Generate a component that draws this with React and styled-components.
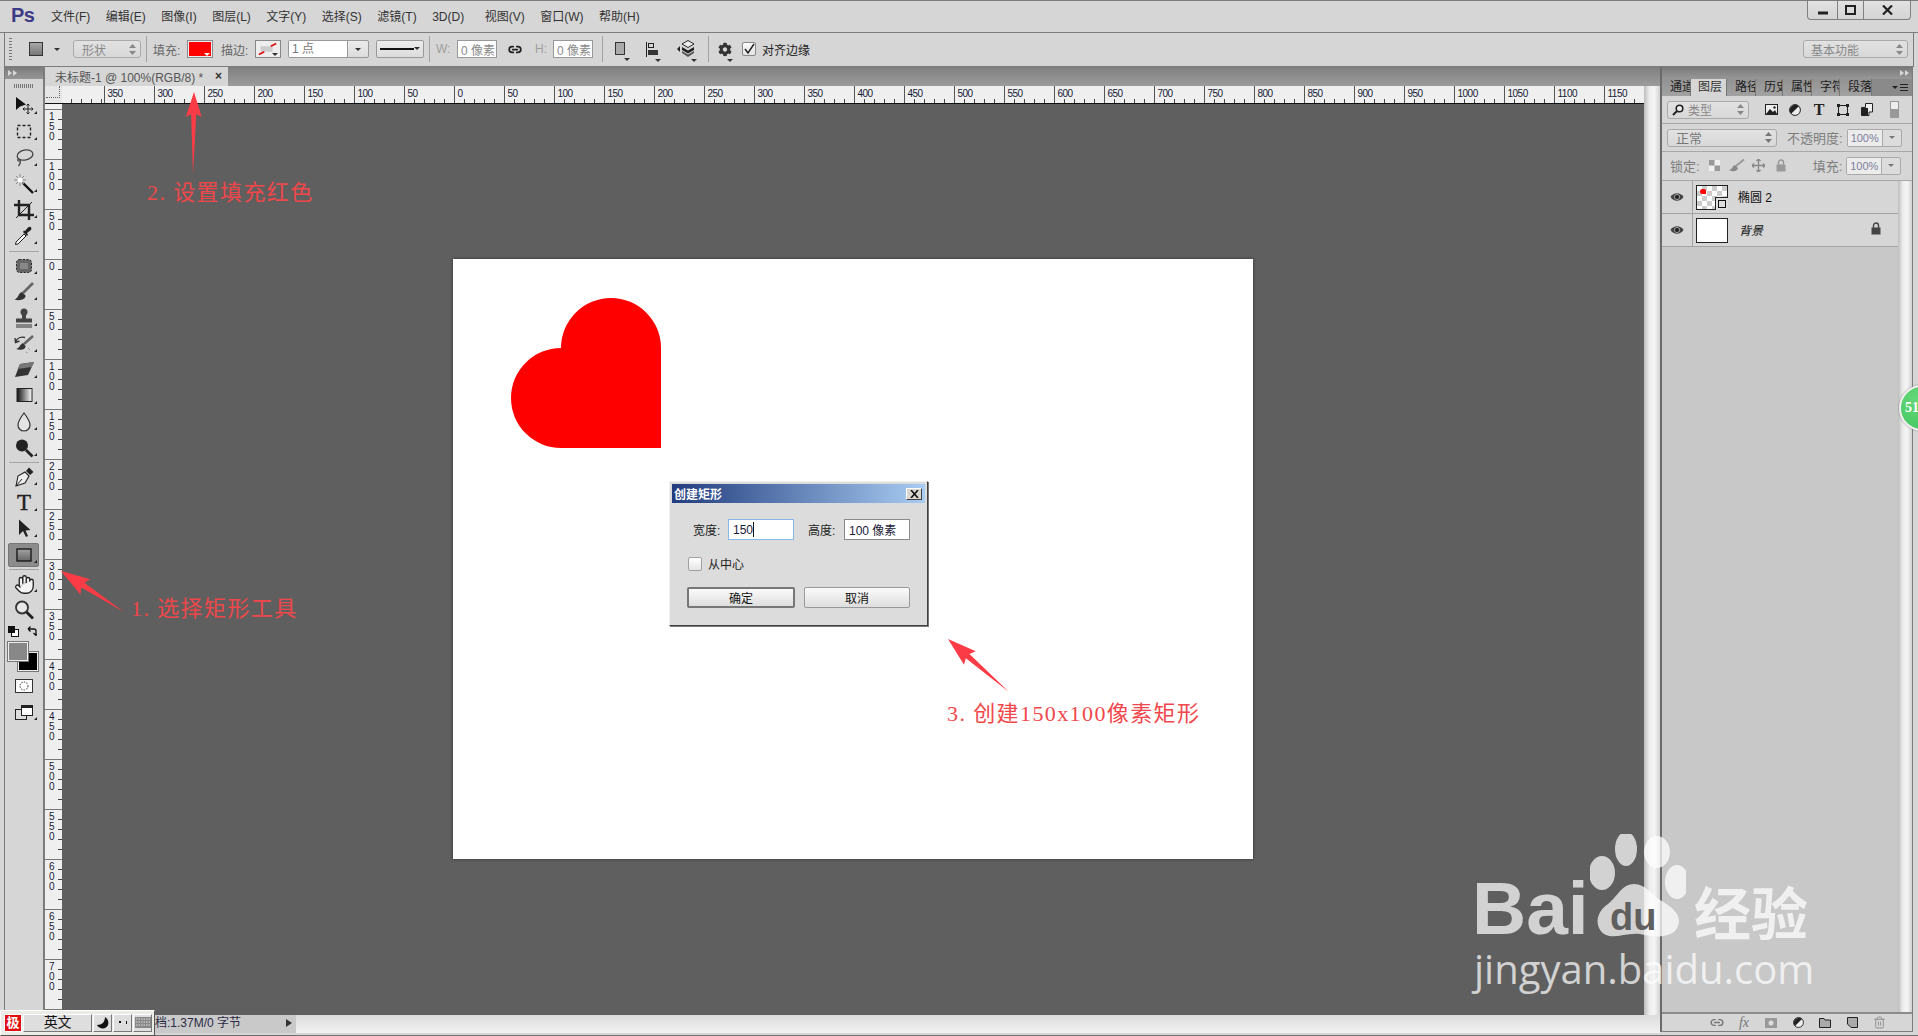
import React from "react";
import styled, { createGlobalStyle } from "styled-components";
import { Hand, Link2, Trash2 } from "lucide-react";
import { FaCog } from "react-icons/fa";

const Global = createGlobalStyle`
  html, body { margin: 0; padding: 0; background: #d6d6d6; }
  * { box-sizing: border-box; }
`;

const Screen = styled.div`
  position: relative;
  width: 1918px;
  height: 1036px;
  overflow: hidden;
  background: #d6d6d6;
  color: #222;
  font-family: "Liberation Sans", "Noto Sans CJK SC", sans-serif;
  font-size: 12px;
`;

/* ---------- title bar ---------- */
const TitleBar = styled.div`
  height: 33px;
  display: flex;
  align-items: center;
  padding: 0 0 2px 11px;
  border-top: 1px solid #7c7c7c;
  border-bottom: 1px solid #7c7c7c;
`;
const Logo = styled.div`
  width: 40px;
  font-size: 20px;
  font-weight: 700;
  color: #3d3a87;
  letter-spacing: -0.5px;
`;
const Menu = styled.div`
  display: flex;
  align-items: baseline;
  gap: 15.5px;
  color: #333;
  & > span:nth-child(8) { margin-right: 5px; }
`;
const WindowButtons = styled.div`
  margin-left: auto;
  margin-right: 7px;
  align-self: flex-start;
  display: flex;
  height: 19px;
  border: 1px solid #808080;
  border-top: 0;
  border-radius: 0 0 4px 4px;
  background: linear-gradient(#e2e2e2, #d4d4d4);
`;
const WindowButton = styled.div`
  width: ${(p) => p.$w}px;
  display: flex;
  align-items: center;
  justify-content: center;
  & + & { border-left: 1px solid #808080; }
`;

/* ---------- options bar ---------- */
const OptionsBar = styled.div`
  height: 34px;
  margin: 0 4px;
  padding-bottom: 1px;
  display: flex;
  align-items: center;
  border-left: 1px solid #7c7c7c;
  border-right: 1px solid #7c7c7c;
  border-bottom: 1px solid #7c7c7c;
`;
const Opt = styled.div`
  flex-shrink: 0;
  position: relative;
  margin-left: ${(p) => p.$ml || 0}px;
  width: ${(p) => p.$w}px;
  display: flex;
  align-items: center;
  white-space: nowrap;
  color: ${(p) => p.$color || "inherit"};
`;
const Grip = styled(Opt)`
  height: 22px;
  background: repeating-linear-gradient(#777 0 1px, transparent 1px 3px);
`;
const Divider = styled(Opt)`
  height: 26px;
  width: 1px;
  background: #a2a2a2;
`;
const ShapeSwatch = styled(Opt)`
  height: 14px;
  border: 1px solid #333;
  background: linear-gradient(#a8a8a8, #777);
`;
const Caret = styled.span`
  display: block;
  width: 0;
  height: 0;
  border-left: 3px solid transparent;
  border-right: 3px solid transparent;
  border-top: 3px solid ${(p) => p.$color || "#333"};
`;
const MiniCaret = styled(Caret)`
  position: absolute;
  right: ${(p) => p.$r ?? 2}px;
  bottom: ${(p) => p.$b ?? 1}px;
`;
const SelectBox = styled(Opt)`
  height: ${(p) => p.$h || 18}px;
  padding: 0 4px 0 ${(p) => p.$pad ?? 8}px;
  justify-content: space-between;
  border: 1px solid #aaa;
  border-radius: 3px;
  background: linear-gradient(#e2e2e2, #d8d8d8);
  color: ${(p) => p.$color || "#888"};
`;
const FilterLabel = styled.span`
  display: flex;
  align-items: center;
  gap: 4px;
  font-size: 12px;
`;
const FillSwatch = styled(Opt)`
  height: 18px;
  border: 1px solid #888;
  padding: 1px;
  background: #eee;
`;
const FillRed = styled.div`
  width: 100%;
  height: 100%;
  background: #f00;
`;
const NumberInput = styled(Opt)`
  height: 18px;
  padding-left: 3px;
  border: 1px solid #999;
  background: #fff;
  color: #8a8a8a;
`;
const SplitInput = styled(Opt)`
  height: 18px;
  border: 1px solid #999;
  border-radius: 2px;
  background: linear-gradient(#ececec, #dcdcdc);
`;
const SplitText = styled.div`
  flex: 1;
  height: 100%;
  padding-left: 3px;
  background: #fff;
  color: #777;
  border-right: 1px solid #999;
  line-height: 16px;
`;
const SplitArrow = styled.div`
  width: 20px;
  display: flex;
  justify-content: center;
`;
const LineBar = styled.div`
  width: 34px;
  height: 2px;
  margin: 0 auto 0 3px;
  background: #111;
`;
const CheckBox = styled(Opt)`
  height: 14px;
  border: 1px solid #888;
  border-radius: 2px;
  background: linear-gradient(#fafafa, #e4e4e4);
  justify-content: center;
`;
const Spread = styled.div`
  margin-left: auto;
  margin-right: 5px;
`;

/* ---------- work area ---------- */
const Workspace = styled.div`
  height: 969px;
  display: flex;
  padding-left: 4px;
  border-bottom: 1px solid #6f6f6f;
`;
const ToolColumn = styled.div`
  width: 41px;
  height: 966px;
  flex-shrink: 0;
  display: flex;
  flex-direction: column;
  border-left: 1px solid #7c7c7c;
  border-right: 2px solid #7c7c7c;
`;
const CollapseBar = styled.div`
  height: 12px;
  flex-shrink: 0;
  padding: 2px 3px;
  display: flex;
  justify-content: ${(p) => (p.$right ? "flex-end" : "flex-start")};
  gap: 1px;
  background: linear-gradient(#7a7a7a, #979797);
`;
const CollapseMark = styled.span`
  width: 0;
  height: 0;
  margin-top: 1px;
  border-top: 3px solid transparent;
  border-bottom: 3px solid transparent;
  border-left: 4px solid #d8d8d8;
`;
const ToolGrip = styled.div`
  height: 14px;
  flex-shrink: 0;
  margin: 0 9px;
  background: repeating-linear-gradient(90deg, #777 0 1px, transparent 1px 2px) center / 100% 4px no-repeat;
`;
const ToolSlot = styled.div`
  position: relative;
  height: 26px;
  flex-shrink: 0;
  display: flex;
  align-items: center;
  justify-content: center;
  &::before {
    content: "";
    display: ${(p) => (p.$active ? "block" : "none")};
    position: absolute;
    left: 3px;
    right: 4px;
    top: 1px;
    bottom: 1px;
    border-radius: 2px;
    background: #8c8c8c;
    border: 1px solid #777;
  }
  & > * { position: relative; }
  &::after {
    content: "";
    display: ${(p) => (p.$more ? "block" : "none")};
    position: absolute;
    right: 6px;
    bottom: 5px;
    border-left: 3px solid transparent;
    border-bottom: 3px solid #222;
  }
`;
const ToolSep = styled.div`
  height: ${(p) => p.$h || 4}px;
  flex-shrink: 0;
  margin: 0 4px;
  display: flex;
  align-items: center;
  &::after {
    content: "";
    width: 100%;
    height: 1px;
    background: #a6a6a6;
  }
`;
const ToolGlyph = styled.span`
  font-family: "Liberation Serif", serif;
  font-size: 23px;
  line-height: 22px;
  color: #222;
  -webkit-text-stroke: 0.4px #222;
`;
const DefaultsRow = styled.div`
  height: 17px;
  flex-shrink: 0;
  display: flex;
  align-items: center;
  justify-content: space-between;
  padding: 0 6px 0 3px;
`;
const SwatchBox = styled.div`
  position: relative;
  height: 33px;
  flex-shrink: 0;
`;
const ColorChip = styled.div`
  position: absolute;
  left: ${(p) => p.$l}px;
  top: ${(p) => p.$t}px;
  width: 20px;
  height: 19px;
  background: ${(p) => p.$c};
  border: 1px solid #eee;
  outline: 1px solid #777;
`;

const DocColumn = styled.div`
  width: 1615px;
  height: 966px;
  flex-shrink: 0;
  display: flex;
  flex-direction: column;
`;
const TabStrip = styled.div`
  height: 19px;
  flex-shrink: 0;
  display: flex;
  background: linear-gradient(#7f7f7f, #9c9c9c);
`;
const DocTab = styled.div`
  width: 183px;
  display: flex;
  align-items: center;
  padding: 0 0 1px 10px;
  background: #d6d6d6;
  color: #555;
  font-size: 12px;
  white-space: nowrap;
`;
const TabClose = styled.span`
  margin-left: auto;
  margin-right: 6px;
  font-weight: 700;
  color: #333;
`;
const DocMain = styled.div`
  flex: 1;
  min-height: 0;
  display: flex;
`;
const ViewArea = styled.div`
  width: 1599px;
  display: flex;
  flex-direction: column;
`;
const HRuler = styled.div`
  height: 18px;
  flex-shrink: 0;
  display: flex;
  overflow: hidden;
  background: #efefef;
  border-bottom: 1px solid #111;
`;
const RulerCorner = styled.div`
  width: 17px;
  flex-shrink: 0;
  position: relative;
  background: #e6e6e6;
  &::after {
    content: "";
    position: absolute;
    left: 1px;
    top: 0;
    width: 13px;
    height: 11px;
    border-right: 1px dotted #666;
    border-bottom: 1px dotted #666;
  }
`;
const HCell = styled.div`
  width: ${(p) => p.$w}px;
  flex-shrink: 0;
  padding: 3px 0 0 3px;
  border-left: ${(p) => (p.$first ? "0" : "1px solid #555")};
  font-size: 10px;
  line-height: 10px;
  letter-spacing: -0.5px;
  color: #151a35;
  background: linear-gradient(90deg, #444 1px, transparent 1px) -1px bottom / 10px 4px repeat-x;
`;
const CanvasRow = styled.div`
  flex: 1;
  min-height: 0;
  display: flex;
`;
const VRuler = styled.div`
  width: 17px;
  flex-shrink: 0;
  overflow: hidden;
  background: #efefef;
`;
const VCell = styled.div`
  height: ${(p) => p.$h}px;
  padding: 2px 0 0 4px;
  border-top: ${(p) => (p.$first ? "0" : "1px solid #777")};
  font-size: 10px;
  line-height: 10px;
  color: #151a35;
  background: linear-gradient(#444 1px, transparent 1px) right -1px / 4px 10px repeat-y;
`;
const Digit = styled.div``;
const Pasteboard = styled.div`
  position: relative;
  flex: 1;
  padding: 155px 0 0 391px;
  background: #5f5f5f;
`;
const Canvas = styled.div`
  width: 800px;
  height: 600px;
  padding: 39px 0 0 58px;
  background: #fff;
  box-shadow: 0 0 3px rgba(0, 0, 0, 0.5);
`;
const HeartSvg = styled.svg`
  display: block;
`;
const Gutter = styled.div`
  width: ${(p) => p.$w}px;
  flex-shrink: 0;
  background: linear-gradient(90deg, #bdbdbd, #ededed 35%, #f5f5f5 65%, #d2d2d2);
`;
const StatusRow = styled.div`
  height: 18px;
  flex-shrink: 0;
  display: flex;
  background: linear-gradient(#dcdcdc, #f2f2f2);
`;
const StatusInfo = styled.div`
  width: 251px;
  display: flex;
  align-items: center;
  padding: 0 0 3px 98px;
  line-height: 14px;
  background: #c9c9c9;
  color: #2a2a44;
  white-space: nowrap;
`;
const StatusArrow = styled.span`
  margin-left: auto;
  margin-right: 4px;
  border-top: 4px solid transparent;
  border-bottom: 4px solid transparent;
  border-left: 6px solid #333;
`;

/* ---------- layers panel ---------- */
const PanelColumn = styled.div`
  width: 253px;
  height: 965px;
  flex-shrink: 0;
  display: flex;
  flex-direction: column;
  border-left: 2px solid #6a6a6a;
  border-right: 1px solid #7c7c7c;
  border-bottom: 1px solid #7c7c7c;
`;
const PanelTabs = styled.div`
  height: 17px;
  flex-shrink: 0;
  display: flex;
  align-items: stretch;
  background: #8a8a8a;
`;
const PanelTab = styled.div`
  width: ${(p) => p.$w}px;
  overflow: hidden;
  white-space: nowrap;
  padding-left: ${(p) => (p.$active ? 7 : 8)}px;
  line-height: 17px;
  background: ${(p) => (p.$active ? "#d6d6d6" : "linear-gradient(#929292, #a2a2a2)")};
  border-right: 1px solid #777;
  color: ${(p) => (p.$active ? "#333" : "#1c1c1c")};
`;
const PanelMenu = styled.div`
  margin-left: auto;
  margin-right: 4px;
  display: flex;
  align-items: center;
  gap: 2px;
`;
const MenuLines = styled.div`
  width: 8px;
  height: 7px;
  background: repeating-linear-gradient(#222 0 1px, transparent 1px 3px);
`;
const PanelRow = styled.div`
  height: ${(p) => p.$h}px;
  flex-shrink: 0;
  display: flex;
  align-items: center;
  padding: 0 0 ${(p) => p.$pb || 0}px 5px;
  border-bottom: 1px solid #a8a8a8;
  color: #7d7d7d;
  font-size: 13px;
`;
const PanelIcon = styled.div`
  margin-left: ${(p) => p.$ml || 0}px;
  width: ${(p) => p.$w || 14}px;
  flex-shrink: 0;
  display: flex;
  justify-content: center;
`;
const PanelGlyph = styled.span`
  font-family: "Liberation Serif", serif;
  font-weight: 700;
  font-size: 16px;
  line-height: 16px;
  color: #222;
`;
const FootGlyph = styled.i`
  font-family: "Liberation Serif", serif;
  font-size: 14px;
  color: #777;
`;
const LayerToggle = styled.div`
  width: 9px;
  height: 17px;
  margin-left: 16px;
  border: 1px solid #999;
  background: linear-gradient(#eee 45%, #999 45%);
`;
const RowLabel = styled.span`
  margin-left: ${(p) => p.$ml}px;
  white-space: nowrap;
`;
const PercentBox = styled.div`
  width: 55px;
  height: 18px;
  margin-left: 4px;
  display: flex;
  border: 1px solid #aaa;
  border-radius: 2px;
  background: #dcdcdc;
`;
const PercentText = styled.div`
  width: 35px;
  padding-left: 3px;
  background: #ececec;
  border-right: 1px solid #aaa;
  color: #7d7d9a;
  font-size: 11px;
  line-height: 16px;
`;
const PercentArrow = styled.div`
  flex: 1;
  display: flex;
  align-items: center;
  justify-content: center;
`;
const PanelMain = styled.div`
  flex: 1;
  min-height: 0;
  display: flex;
`;
const LayerList = styled.div`
  flex: 1;
  background: #c8c8c8;
`;
const LayerRow = styled.div`
  height: ${(p) => p.$h}px;
  display: flex;
  align-items: center;
  background: #d6d6d6;
  border-bottom: 1px solid #a4a4a4;
`;
const EyeCell = styled.div`
  width: 31px;
  height: 100%;
  flex-shrink: 0;
  display: flex;
  align-items: center;
  justify-content: center;
  border-right: 1px solid #a4a4a4;
`;
const Thumb = styled.div`
  position: relative;
  width: 32px;
  height: 25px;
  margin-left: 3px;
  border: 1px solid #222;
  background: ${(p) => (p.$checker ? "repeating-conic-gradient(#ccc 0 25%, #fff 0 50%) 0 0 / 10px 10px" : "#fff")};
`;
const ThumbHeart = styled.div`
  position: absolute;
  left: 3px;
  top: 3px;
  width: 6px;
  height: 5px;
  border-radius: 3px 2px 0 3px;
  background: #f00;
`;
const ThumbMask = styled.div`
  position: absolute;
  right: -1px;
  bottom: -1px;
  width: 13px;
  height: 13px;
  background: #ddd;
  border: 1px solid #222;
  border-width: 1px 0 0 1px;
  padding: 2px;
`;
const MaskInner = styled.div`
  width: 100%;
  height: 100%;
  border: 1px solid #111;
`;
const LayerName = styled.span`
  margin-left: ${(p) => p.$ml}px;
  padding-bottom: 1px;
  color: #111;
  font-style: ${(p) => (p.$italic ? "italic" : "normal")};
`;
const LayerLock = styled.div`
  margin-left: auto;
  margin-right: 17px;
`;
const PanelFoot = styled.div`
  height: 19px;
  flex-shrink: 0;
  display: flex;
  align-items: center;
  gap: 13px;
  padding-left: 48px;
  border-top: 2px solid #8c8c8c;
`;

/* ---------- dialog ---------- */
const Dialog = styled.div`
  position: absolute;
  left: 607px;
  top: 377px;
  width: 259px;
  height: 145px;
  padding: 2px;
  background: #dcdcdc;
  border: 1px solid;
  border-color: #f2f2ee #404040 #404040 #f2f2ee;
  box-shadow: 1px 1px 0 #7a7a7a;
`;
const DialogTitle = styled.div`
  height: 19px;
  display: flex;
  align-items: center;
  justify-content: space-between;
  padding: 0 3px 0 2px;
  background: linear-gradient(90deg, #223c7e, #a8ccf2);
  color: #fff;
  font-weight: 700;
`;
const CloseBox = styled.div`
  width: 16px;
  height: 12px;
  display: flex;
  align-items: center;
  justify-content: center;
  background: #d8d6ce;
  border: 1px solid;
  border-color: #fff #404040 #404040 #fff;
`;
const DialogBody = styled.div`
  padding: 16px 0 0 21px;
`;
const FieldRow = styled.div`
  display: flex;
  align-items: center;
`;
const FieldLabel = styled.span`
  width: ${(p) => p.$w}px;
  margin-left: ${(p) => p.$ml || 0}px;
  color: #222;
`;
const FieldInput = styled.div`
  width: 66px;
  height: 21px;
  padding-left: 4px;
  display: flex;
  align-items: center;
  background: #fff;
  border: 1px solid ${(p) => (p.$focus ? "#86b6ea" : "#8a8a8a")};
  color: #1a1a3a;
`;
const TextCaret = styled.span`
  width: 1px;
  height: 15px;
  background: #111;
`;
const CheckRow = styled(FieldRow)`
  margin: 15px 0 0 -5px;
`;
const EmptyCheck = styled.div`
  width: 14px;
  height: 14px;
  margin-right: 6px;
  border: 1px solid #a0a0a0;
  border-radius: 2px;
  background: linear-gradient(#fff, #e6e6e6);
`;
const ButtonRow = styled(FieldRow)`
  margin: 15px 0 0 -6px;
  gap: 9px;
`;
const DialogButton = styled.div`
  width: ${(p) => p.$w}px;
  height: 21px;
  display: flex;
  align-items: center;
  justify-content: center;
  border: ${(p) => (p.$primary ? "2px solid #777" : "1px solid #999")};
  border-radius: 2px;
  background: linear-gradient(#fafafa, #dedede);
  color: #111;
`;

/* ---------- things lying on top ---------- */
const Note = styled.div`
  position: absolute;
  left: ${(p) => p.$x}px;
  top: ${(p) => p.$y}px;
  font-family: "Liberation Serif", "Noto Sans CJK SC", serif;
  font-size: 22px;
  line-height: 28px;
  letter-spacing: 1.4px;
  color: #f0474b;
  white-space: nowrap;
`;
const ArrowLayer = styled.svg`
  position: absolute;
  left: 0;
  top: 0;
  pointer-events: none;
`;
const Watermark = styled.div`
  position: absolute;
  left: 1472px;
  top: 834px;
  width: 350px;
  color: rgba(255, 255, 255, 0.72);
  pointer-events: none;
`;
const BrandRow = styled.div`
  display: flex;
  align-items: flex-start;
  height: 108px;
`;
const BrandBai = styled.div`
  margin-top: 40px;
  width: 118px;
  font-weight: 700;
  font-size: 75px;
  line-height: 68px;
`;
const BrandCn = styled.div`
  margin: 46px 0 0 8px;
  font-family: "Noto Sans CJK SC", sans-serif;
  font-weight: 700;
  font-size: 57px;
  line-height: 60px;
  white-space: nowrap;
`;
const BrandDomain = styled.div`
  margin: 2px 0 0 2px;
  font-family: "Open Sans", sans-serif;
  font-size: 40px;
  line-height: 50px;
  white-space: nowrap;
`;
const ImeBar = styled.div`
  position: absolute;
  left: 0;
  top: 1010px;
  width: 155px;
  height: 26px;
  padding: 3px 2px 3px 3px;
  display: flex;
  gap: 1px;
  background: #ecece6;
  border: 1px solid;
  border-color: #fff #555 #555 #fff;
`;
const ImeSeal = styled.div`
  width: 18px;
  display: flex;
  align-items: center;
  justify-content: center;
  background: #e01010;
  border: 1px solid #fff;
  color: #fff;
  font-weight: 700;
  font-size: 13px;
  line-height: 14px;
`;
const ImeKey = styled.div`
  width: ${(p) => p.$w}px;
  display: flex;
  align-items: center;
  justify-content: center;
  padding-bottom: 1px;
  background: #dedede;
  border: 1px solid;
  border-color: #fff #777 #777 #fff;
  font-size: 14px;
  line-height: 15px;
  color: #111;
`;
const Badge = styled.div`
  position: absolute;
  left: 1899px;
  top: 385px;
  width: 46px;
  height: 46px;
  padding-left: 4px;
  display: flex;
  align-items: center;
  border-radius: 50%;
  background: radial-gradient(circle at 40% 30%, #66d879, #3cc45a);
  border: 2px solid #eee;
  box-shadow: 0 0 2px #777;
  color: #fff;
  font-family: "Liberation Serif", serif;
  font-weight: 700;
  font-size: 14px;
`;

/* ---------- drawings ---------- */
const ToolSvg = ({ children }) => (
  <svg width="22" height="22" viewBox="0 0 22 22">{children}</svg>
);

const toolIcons = {
  move: (
    <>
      <path d="M3 2V15L7 11.5L13 9.5Z" fill="#111" />
      <path d="M15 9V19M10 14H20M13.5 10.5L15 9L16.5 10.5M13.5 17.5L15 19L16.5 17.5M11.5 12.5L10 14L11.5 15.5M18.5 12.5L20 14L18.5 15.5" stroke="#222" fill="none" />
    </>
  ),
  marquee: <rect x="4.5" y="4.5" width="13" height="12" fill="none" stroke="#222" strokeWidth="1.4" strokeDasharray="3 2" />,
  lasso: (
    <>
      <ellipse cx="12" cy="8" rx="8" ry="5" transform="rotate(-12 12 8)" fill="none" stroke="#444" strokeWidth="1.3" />
      <path d="M6 11.5C3 13 6 15 7 13.5C8 15 7 17 5.5 19" fill="none" stroke="#444" strokeWidth="1.3" />
    </>
  ),
  wand: (
    <>
      <path d="M10 10L20 20" stroke="#111" strokeWidth="2.4" />
      <path d="M7 1V13M1 7H13M3 3L11 11M11 3L3 11" stroke="#888" strokeWidth="1" />
      <circle cx="7" cy="7" r="2.5" fill="#fff" />
    </>
  ),
  crop: (
    <>
      <path d="M6 1V16H21M1 6H16V21" fill="none" stroke="#222" strokeWidth="2.4" />
      <path d="M3 19L19 3" stroke="#222" strokeWidth="1" />
    </>
  ),
  dropper: (
    <>
      <path d="M2.5 19.5L3 17L11 9L13 11L5 19Z" fill="#f4f4f4" stroke="#222" />
      <path d="M10 7L12 9L14 11L15 10L14 8L18 5C19.5 3 17 .5 15 2.5L12 6L11 5.5Z" fill="#222" />
    </>
  ),
  heal: (
    <>
      <rect x="3.5" y="4.5" width="15" height="13" rx="3" fill="#666" stroke="#222" strokeDasharray="2 1.5" />
      <rect x="7" y="8" width="8" height="6" fill="#888" />
    </>
  ),
  brush: (
    <>
      <path d="M20 2L10 12" stroke="#666" strokeWidth="2.6" />
      <path d="M9 11C5 12 6 17 1.5 18.5C7 20.5 13 18 12.5 14.5Z" fill="#333" />
    </>
  ),
  stamp: (
    <>
      <circle cx="11" cy="5" r="3.5" fill="#444" />
      <rect x="9" y="7" width="4" height="5" fill="#444" />
      <rect x="3" y="11.5" width="16" height="4" fill="#444" />
      <path d="M3 18H19M3 20H19" stroke="#333" />
    </>
  ),
  history: (
    <>
      <path d="M20 3L11 11" stroke="#666" strokeWidth="2.4" />
      <path d="M10 10C7 11 7 15 3 16C8 18 13 16 12.5 13Z" fill="#333" />
      <path d="M2.5 9C4 5 8 3.5 12 4.5M2 5L2.5 9.5L6.5 8" fill="none" stroke="#333" strokeWidth="1.4" />
      <path d="M15 15L17 17M13 19L15 20" stroke="#777" strokeDasharray="1 1" />
    </>
  ),
  eraser: (
    <>
      <path d="M7 5L21 3L15 16L2 18Z" fill="#333" />
      <path d="M7 5L21 3L18.5 8L4.5 10Z" fill="#777" />
    </>
  ),
  gradient: (
    <>
      <defs>
        <linearGradient id="toolGradient" x1="0" x2="1" y1="0" y2="0">
          <stop offset="0" stopColor="#111" />
          <stop offset="1" stopColor="#fff" />
        </linearGradient>
      </defs>
      <rect x="4" y="3.5" width="15" height="13" fill="url(#toolGradient)" stroke="#222" />
    </>
  ),
  drop: <path d="M11 2C11 2 5 10 5 14A6 6 0 0 0 17 14C17 10 11 2 11 2Z" fill="#e4e4e4" stroke="#333" strokeWidth="1.2" />,
  burn: (
    <>
      <circle cx="9" cy="8.5" r="6" fill="#222" />
      <path d="M13 13L19.5 19.5" stroke="#222" strokeWidth="2.8" />
    </>
  ),
  pen: (
    <>
      <path d="M3 20L5 10L12 6L16 10L12 17Z" fill="#eee" stroke="#222" strokeWidth="1.1" />
      <path d="M3 20L9 13" stroke="#222" />
      <path d="M13 5L16 1.5L20.5 6L17 9Z" fill="#222" />
    </>
  ),
  arrow: <path d="M6 1.5V17L10 13L13 19L15 18L12.5 12.5L17.5 12Z" fill="#222" />,
  rect: (
    <>
      <defs>
        <linearGradient id="toolRect" x1="0" x2="0" y1="0" y2="1">
          <stop offset="0" stopColor="#a2a2a2" />
          <stop offset="1" stopColor="#666" />
        </linearGradient>
      </defs>
      <rect x="4" y="5" width="14" height="12" fill="url(#toolRect)" stroke="#111" strokeWidth="1.3" />
    </>
  ),
  zoom: (
    <>
      <circle cx="9" cy="8.5" r="6" fill="#e8e8e8" stroke="#333" strokeWidth="1.8" />
      <path d="M13.5 13L20 19.5" stroke="#222" strokeWidth="2.8" />
    </>
  ),
};

const tools = [
  ["move"], ["marquee"], ["lasso"], ["wand"], ["crop"], ["dropper"], "sep",
  ["heal"], ["brush"], ["stamp"], ["history"], ["eraser"], ["gradient"], ["drop"], ["burn"], "sep3",
  ["pen"], ["T"], ["arrow"], ["rect", true], "sep3",
  ["hand"], ["zoom", false, true],
];

const Eye = () => (
  <svg width="14" height="10" viewBox="0 0 14 10">
    <path d="M0.5 5C3.5 0 10.5 0 13.5 5C10.5 10 3.5 10 .5 5Z" fill="#444" />
    <circle cx="7" cy="5" r="2.6" fill="#222" stroke="#bbb" strokeWidth=".8" />
  </svg>
);
const LockIcon = ({ color = "#333", w = 10 }) => (
  <svg width={w} height="13" viewBox="0 0 10 13">
    <path d="M2.5 6V3.5a2.5 2.5 0 0 1 5 0V6" fill="none" stroke={color} strokeWidth="1.4" />
    <rect x="0.5" y="5.5" width="9" height="7" fill={color} />
  </svg>
);
const UpDown = ({ color = "#888" }) => (
  <svg width="7" height="11" viewBox="0 0 7 11">
    <path d="M3.5 0L7 4H0ZM3.5 11L0 7H7Z" fill={color} />
  </svg>
);
const Check = () => (
  <svg width="12" height="12" viewBox="0 0 12 12">
    <path d="M2 6L5 10L11 1" fill="none" stroke="#222" strokeWidth="1.5" />
  </svg>
);
const StrokeIcon = () => (
  <svg width="24" height="16" viewBox="0 0 24 16">
    <rect x="4" y="5" width="13" height="6" fill="#ccc" />
    <path d="M2 14L8 11M15 5L21 2" stroke="#e01010" strokeWidth="2" />
  </svg>
);
const PathOpsIcon = () => (
  <svg width="10" height="14" viewBox="0 0 10 14">
    <rect x=".5" y=".5" width="9" height="12" fill="#aaa" stroke="#333" />
  </svg>
);
const AlignIcon = () => (
  <svg width="14" height="15" viewBox="0 0 14 15">
    <path d="M.5 0V15" stroke="#222" />
    <rect x="2.5" y="1.5" width="5" height="4" fill="none" stroke="#222" />
    <rect x="2" y="8" width="10" height="5" fill="#333" />
  </svg>
);
const ArrangeIcon = () => (
  <svg width="18" height="18" viewBox="0 0 18 18">
    <path d="M0 9L3 6V12Z" fill="#222" />
    <path d="M11 .5L17 4L11 7.5L5 4Z" fill="#eee" stroke="#222" />
    <path d="M5 7L11 10.5L17 7V10L11 13.5L5 10Z" fill="#222" />
    <path d="M5 11L11 14.5L17 11V13L11 17L5 13Z" fill="#555" />
  </svg>
);
const ImageIcon = () => (
  <svg width="13" height="11" viewBox="0 0 13 11">
    <rect x=".5" y=".5" width="12" height="10" fill="#eee" stroke="#222" />
    <path d="M1 10L5 5L8 8L10 6L12 10Z" fill="#222" />
    <circle cx="9.5" cy="3.5" r="1.2" fill="#222" />
  </svg>
);
const HalfCircle = ({ size = 12 }) => (
  <svg width={size} height={size} viewBox="0 0 12 12">
    <circle cx="6" cy="6" r="5.4" fill="#eee" stroke="#222" />
    <path d="M9.8 2.2A5.4 5.4 0 0 0 2.2 9.8Z" fill="#222" />
  </svg>
);
const ShapeIcon = () => (
  <svg width="12" height="12" viewBox="0 0 12 12">
    <rect x="1.5" y="1.5" width="9" height="9" fill="none" stroke="#222" />
    <path d="M0 0h3v3H0zM9 0h3v3H9zM0 9h3v3H0zM9 9h3v3H9z" fill="#222" />
  </svg>
);
const SmartIcon = () => (
  <svg width="12" height="13" viewBox="0 0 12 13">
    <path d="M4.5.5H11.5V9H8V12.5H.5V4.5H4.5Z" fill="#eee" stroke="#222" />
    <path d="M1 5H7V12H1Z" fill="#222" />
  </svg>
);
const Magnifier = () => (
  <svg width="12" height="12" viewBox="0 0 12 12">
    <circle cx="7.5" cy="4.5" r="3.3" fill="#eee" stroke="#222" strokeWidth="1.6" />
    <path d="M5 7L1 11" stroke="#222" strokeWidth="2" />
  </svg>
);

const ToolIcon = ({ name }) => {
  if (name === "T") return <ToolGlyph>T</ToolGlyph>;
  if (name === "hand") return <Hand size={21} strokeWidth={1.5} color="#222" fill="#f4f4f4" />;
  return <ToolSvg>{toolIcons[name]}</ToolSvg>;
};

// head flares out near the tip, tail narrows to a point
const arrowPoints = (tx, ty, px, py, headLen, headW, neckW) => {
  const len = Math.hypot(px - tx, py - ty);
  const ux = (px - tx) / len;
  const uy = (py - ty) / len;
  const nx = -uy;
  const ny = ux;
  const bx = px - ux * headLen;
  const by = py - uy * headLen;
  const pt = (d, w) => `${(px - ux * d + nx * w).toFixed(1)},${(py - uy * d + ny * w).toFixed(1)}`;
  return [
    `${tx},${ty}`,
    `${(bx + nx * neckW).toFixed(1)},${(by + ny * neckW).toFixed(1)}`,
    pt(headLen + 3, headW),
    `${px},${py}`,
    pt(headLen + 3, -headW),
    `${(bx - nx * neckW).toFixed(1)},${(by - ny * neckW).toFixed(1)}`,
  ].join(" ");
};

const menuItems = ["文件(F)", "编辑(E)", "图像(I)", "图层(L)", "文字(Y)", "选择(S)", "滤镜(T)", "3D(D)", "视图(V)", "窗口(W)", "帮助(H)"];
const panelTabs = [["通道", 29], ["图层", 36, true], ["路径", 29], ["历史", 27], ["属性", 29], ["字符", 28], ["段落", 32]];
const hLabels = Array.from({ length: 31 }, (_, i) => Math.abs(350 - i * 50));
const vLabels = Array.from({ length: 18 }, (_, i) => Math.abs(150 - i * 50));

const App = () => (
  <Screen>
    <Global />
    <TitleBar>
      <Logo>Ps</Logo>
      <Menu>
        {menuItems.map((m) => (
          <span key={m}>{m}</span>
        ))}
      </Menu>
      <WindowButtons>
        <WindowButton $w={29}>
          <svg width="12" height="10" viewBox="0 0 12 10"><path d="M1 8H11" stroke="#222" strokeWidth="3" /></svg>
        </WindowButton>
        <WindowButton $w={26}>
          <svg width="11" height="10" viewBox="0 0 11 10"><rect x="1" y="1" width="9" height="8" fill="none" stroke="#222" strokeWidth="2" /></svg>
        </WindowButton>
        <WindowButton $w={47}>
          <svg width="11" height="10" viewBox="0 0 11 10"><path d="M1 .5L10 9.5M10 .5L1 9.5" stroke="#222" strokeWidth="2.2" /></svg>
        </WindowButton>
      </WindowButtons>
    </TitleBar>

    <OptionsBar>
      <Grip $ml={4} $w={3} />
      <ShapeSwatch $ml={17} $w={14} />
      <Opt $ml={11} $w={6}><Caret /></Opt>
      <SelectBox $ml={13} $w={68}><span>形状</span><UpDown /></SelectBox>
      <Divider $ml={5} />
      <Opt $ml={6} $w={30} $color="#666">填充:</Opt>
      <FillSwatch $ml={4} $w={26}><FillRed /><MiniCaret $color="#fff" /></FillSwatch>
      <Opt $ml={8} $w={29} $color="#666">描边:</Opt>
      <FillSwatch $ml={5} $w={26}><StrokeIcon /><MiniCaret /></FillSwatch>
      <SplitInput $ml={7} $w={81}>
        <SplitText>1 点</SplitText>
        <SplitArrow><Caret /></SplitArrow>
      </SplitInput>
      <SplitInput $ml={7} $w={48}>
        <LineBar />
        <MiniCaret $r={3} $b={7} />
      </SplitInput>
      <Divider $ml={5} />
      <Opt $ml={6} $w={13} $color="#a0a0a0">W:</Opt>
      <NumberInput $ml={8} $w={40}>0 像素</NumberInput>
      <Opt $ml={11} $w={14}><Link2 size={15} strokeWidth={3} color="#222" /></Opt>
      <Opt $ml={13} $w={12} $color="#a0a0a0">H:</Opt>
      <NumberInput $ml={6} $w={40}>0 像素</NumberInput>
      <Divider $ml={9} />
      <Opt $ml={12} $w={10}><PathOpsIcon /><MiniCaret $r={-5} $b={-5} /></Opt>
      <Opt $ml={21} $w={14}><AlignIcon /><MiniCaret $r={-1} $b={-5} /></Opt>
      <Opt $ml={17} $w={18}><ArrangeIcon /><MiniCaret $r={-2} $b={-4} /></Opt>
      <Divider $ml={13} />
      <Opt $ml={9} $w={14}><FaCog size={15} color="#333" /><MiniCaret $r={-1} $b={-5} /></Opt>
      <CheckBox $ml={10} $w={14}><Check /></CheckBox>
      <Opt $ml={6} $color="#222">对齐边缘</Opt>
      <Spread>
        <SelectBox $w={105} $pad={7}><span>基本功能</span><UpDown /></SelectBox>
      </Spread>
    </OptionsBar>

    <Workspace>
      <ToolColumn>
        <CollapseBar><CollapseMark /><CollapseMark /></CollapseBar>
        <ToolGrip />
        {tools.map((t, i) => {
          if (t === "sep") return <ToolSep key={i} />;
          if (t === "sep3") return <ToolSep key={i} $h={3} />;
          return (
            <ToolSlot key={i} $active={t[1]} $more={!t[2]}>
              <ToolIcon name={t[0]} />
            </ToolSlot>
          );
        })}
        <DefaultsRow>
          <svg width="11" height="11" viewBox="0 0 11 11">
            <rect x="3.5" y="3.5" width="7" height="7" fill="#fff" stroke="#111" />
            <rect x="0" y="0" width="7" height="7" fill="#111" />
          </svg>
          <svg width="10" height="11" viewBox="0 0 10 11">
            <path d="M1 3H7C8.5 3 9 4 9 5V9M1 3L3.5 .5M1 3L3.5 5.5M9 9.5L6.5 7M9 9.5L10 8" fill="none" stroke="#111" strokeWidth="1.3" />
          </svg>
        </DefaultsRow>
        <SwatchBox>
          <ColorChip $l={13} $t={12} $c="#000" />
          <ColorChip $l={3} $t={2} $c="#888" />
        </SwatchBox>
        <ToolSlot>
          <svg width="18" height="14" viewBox="0 0 18 14">
            <rect x=".5" y=".5" width="17" height="13" fill="#fff" stroke="#333" />
            <circle cx="9" cy="7" r="4" fill="none" stroke="#333" strokeDasharray="1.4 1.2" />
          </svg>
        </ToolSlot>
        <ToolSlot $more>
          <svg width="18" height="15" viewBox="0 0 18 15">
            <rect x=".5" y="4.5" width="11" height="10" fill="#ddd" stroke="#222" />
            <rect x="6.5" y=".5" width="11" height="10" fill="#fff" stroke="#222" />
            <rect x="6" y="0" width="12" height="3" fill="#222" />
          </svg>
        </ToolSlot>
      </ToolColumn>

      <DocColumn>
        <TabStrip>
          <DocTab>
            未标题-1 @ 100%(RGB/8) *
            <TabClose>×</TabClose>
          </DocTab>
        </TabStrip>
        <DocMain>
          <ViewArea>
            <HRuler>
              <RulerCorner />
              <HCell $w={41.5} $first />
              {hLabels.map((n, i) => (
                <HCell key={i} $w={i === hLabels.length - 1 ? 40.5 : 50}>{n}</HCell>
              ))}
            </HRuler>
            <CanvasRow>
              <VRuler>
                <VCell $h={5} $first />
                {vLabels.map((n, i) => (
                  <VCell key={i} $h={50}>
                    {String(n).split("").map((d, k) => (
                      <Digit key={k}>{d}</Digit>
                    ))}
                  </VCell>
                ))}
                <VCell $h={6} />
              </VRuler>
              <Pasteboard>
                <Canvas>
                  <HeartSvg width="150" height="150" viewBox="0 0 150 150">
                    <path d="M50 150A50 50 0 0 1 50 50A50 50 0 0 1 150 50V150Z" fill="#f00" />
                  </HeartSvg>
                </Canvas>
                <Dialog>
                  <DialogTitle>
                    创建矩形
                    <CloseBox>
                      <svg width="9" height="8" viewBox="0 0 9 8"><path d="M1 0L8 8M8 0L1 8" stroke="#111" strokeWidth="1.6" /></svg>
                    </CloseBox>
                  </DialogTitle>
                  <DialogBody>
                    <FieldRow>
                      <FieldLabel $w={35}>宽度:</FieldLabel>
                      <FieldInput $focus>150<TextCaret /></FieldInput>
                      <FieldLabel $w={36} $ml={14}>高度:</FieldLabel>
                      <FieldInput>100 像素</FieldInput>
                    </FieldRow>
                    <CheckRow>
                      <EmptyCheck />
                      <span>从中心</span>
                    </CheckRow>
                    <ButtonRow>
                      <DialogButton $w={108} $primary>确定</DialogButton>
                      <DialogButton $w={106}>取消</DialogButton>
                    </ButtonRow>
                  </DialogBody>
                </Dialog>
              </Pasteboard>
            </CanvasRow>
          </ViewArea>
          <Gutter $w={16} />
        </DocMain>
        <StatusRow>
          <StatusInfo>
            文档:1.37M/0 字节
            <StatusArrow />
          </StatusInfo>
        </StatusRow>
      </DocColumn>

      <PanelColumn>
        <CollapseBar $right><CollapseMark /><CollapseMark /></CollapseBar>
        <PanelTabs>
          {panelTabs.map(([t, w, a]) => (
            <PanelTab key={t} $w={w} $active={a}>{t}</PanelTab>
          ))}
          <PanelMenu><Caret $color="#222" /><MenuLines /></PanelMenu>
        </PanelTabs>
        <PanelRow $h={28}>
          <SelectBox $w={82} $h={18} $pad={4} $color="#888">
            <FilterLabel><Magnifier />类型</FilterLabel>
            <UpDown />
          </SelectBox>
          <PanelIcon $ml={15}><ImageIcon /></PanelIcon>
          <PanelIcon $ml={10}><HalfCircle /></PanelIcon>
          <PanelIcon $ml={10}><PanelGlyph>T</PanelGlyph></PanelIcon>
          <PanelIcon $ml={10}><ShapeIcon /></PanelIcon>
          <PanelIcon $ml={10}><SmartIcon /></PanelIcon>
          <LayerToggle />
        </PanelRow>
        <PanelRow $h={28}>
          <SelectBox $w={110} $pad={8} $color="#777"><span>正常</span><UpDown color="#777" /></SelectBox>
          <RowLabel $ml={10}>不透明度:</RowLabel>
          <PercentBox>
            <PercentText>100%</PercentText>
            <PercentArrow><Caret $color="#777" /></PercentArrow>
          </PercentBox>
        </PanelRow>
        <PanelRow $h={29} $pb={1}>
          <RowLabel $ml={3}>锁定:</RowLabel>
          <PanelIcon $ml={9} $w={11}>
            <svg width="11" height="11" viewBox="0 0 11 11">
              <rect width="11" height="11" fill="#eee" />
              <path d="M0 0h5.5v5.5H0zM5.5 5.5H11V11H5.5z" fill="#999" />
            </svg>
          </PanelIcon>
          <PanelIcon $ml={9} $w={16}>
            <svg width="16" height="13" viewBox="0 0 16 13">
              <path d="M15 .5L7 7" stroke="#999" strokeWidth="2" />
              <path d="M6 6C3 7 4 10 0 11C4 13.5 9 12 9 9Z" fill="#888" />
            </svg>
          </PanelIcon>
          <PanelIcon $ml={7} $w={13}>
            <svg width="13" height="13" viewBox="0 0 13 13">
              <path d="M6.5 0V13M0 6.5H13M4.5 2L6.5 0L8.5 2M4.5 11L6.5 13L8.5 11M2 4.5L0 6.5L2 8.5M11 4.5L13 6.5L11 8.5" fill="none" stroke="#888" strokeWidth="1.3" />
            </svg>
          </PanelIcon>
          <PanelIcon $ml={11} $w={10}><LockIcon color="#999" /></PanelIcon>
          <RowLabel $ml={27}>填充:</RowLabel>
          <PercentBox>
            <PercentText>100%</PercentText>
            <PercentArrow><Caret $color="#777" /></PercentArrow>
          </PercentBox>
        </PanelRow>
        <PanelMain>
          <LayerList>
            <LayerRow $h={33}>
              <EyeCell><Eye /></EyeCell>
              <Thumb $checker>
                <ThumbHeart />
                <ThumbMask><MaskInner /></ThumbMask>
              </Thumb>
              <LayerName $ml={10}>椭圆 2</LayerName>
            </LayerRow>
            <LayerRow $h={33}>
              <EyeCell><Eye /></EyeCell>
              <Thumb />
              <LayerName $ml={11} $italic>背景</LayerName>
              <LayerLock><LockIcon color="#444" /></LayerLock>
            </LayerRow>
          </LayerList>
          <Gutter $w={14} />
        </PanelMain>
        <PanelFoot>
          <PanelIcon><Link2 size={15} strokeWidth={2.4} color="#777" /></PanelIcon>
          <PanelIcon><FootGlyph>fx</FootGlyph></PanelIcon>
          <PanelIcon>
            <svg width="12" height="10" viewBox="0 0 12 10">
              <rect width="12" height="10" fill="#999" />
              <circle cx="6" cy="5" r="2.5" fill="#ddd" />
            </svg>
          </PanelIcon>
          <PanelIcon><HalfCircle size={11} /></PanelIcon>
          <PanelIcon>
            <svg width="12" height="10" viewBox="0 0 12 10">
              <path d="M.5 9.5V.5H5L6 2H11.5V9.5Z" fill="#aaa" stroke="#222" />
            </svg>
          </PanelIcon>
          <PanelIcon>
            <svg width="11" height="11" viewBox="0 0 11 11">
              <path d="M.5.5H10.5V10.5H4L.5 7Z" fill="#aaa" stroke="#222" />
            </svg>
          </PanelIcon>
          <PanelIcon><Trash2 size={13} strokeWidth={1.6} color="#888" /></PanelIcon>
        </PanelFoot>
      </PanelColumn>
    </Workspace>

    <Note $x={147} $y={179}>2. 设置填充红色</Note>
    <Note $x={131} $y={595}>1. 选择矩形工具</Note>
    <Note $x={947} $y={700}>3. 创建150x100像素矩形</Note>
    <ArrowLayer width="1918" height="1036" viewBox="0 0 1918 1036">
      <polygon points={arrowPoints(193, 174, 194, 92, 22, 8, 2.6)} fill="#fb3b46" />
      <polygon points={arrowPoints(124, 612, 61, 571, 26, 9, 2.8)} fill="#fb3b46" />
      <polygon points={arrowPoints(1009, 692, 948, 639, 26, 9, 2.8)} fill="#fb3b46" />
    </ArrowLayer>

    <Watermark>
      <BrandRow>
        <BrandBai>Bai</BrandBai>
        <svg width="96" height="108" viewBox="0 0 96 108" fill="currentColor" style={{ flexShrink: 0 }}>
          <ellipse cx="12" cy="39" rx="13" ry="17" />
          <ellipse cx="36" cy="15" rx="11" ry="17" />
          <ellipse cx="67" cy="18" rx="13" ry="16" />
          <ellipse cx="87" cy="48" rx="12" ry="17" />
          <path d="M44 50C56 50 60 60 70 66C84 74 92 82 88 92C84 104 66 104 50 100C36 98 24 106 14 100C4 92 6 78 18 70C28 62 32 50 44 50Z" />
          <text x="20" y="96" fontFamily="Liberation Sans, sans-serif" fontWeight="700" fontSize="38" fill="#5f5f5f">du</text>
        </svg>
        <BrandCn>经验</BrandCn>
      </BrandRow>
      <BrandDomain>jingyan.baidu.com</BrandDomain>
    </Watermark>

    <ImeBar>
      <ImeSeal>极</ImeSeal>
      <ImeKey $w={70}>英文</ImeKey>
      <ImeKey $w={19}>
        <svg width="12" height="12" viewBox="0 0 12 12"><path d="M8 0C8 5 5 8 0 8C2 12 9 13 11 8C12 5 11 2 8 0Z" fill="#111" /></svg>
      </ImeKey>
      <ImeKey $w={19}>
        <svg width="10" height="4" viewBox="0 0 10 4"><path d="M1 0h2v2H1zM8 0h1v3H8z" fill="#111" /></svg>
      </ImeKey>
      <ImeKey $w={19}>
        <svg width="16" height="11" viewBox="0 0 16 11">
          <rect width="16" height="11" fill="#888" />
          <path d="M1 2H15M1 5H15M1 8H15" stroke="#ddd" strokeDasharray="1.5 1" />
        </svg>
      </ImeKey>
    </ImeBar>

    <Badge>51</Badge>
  </Screen>
);

export default App;
